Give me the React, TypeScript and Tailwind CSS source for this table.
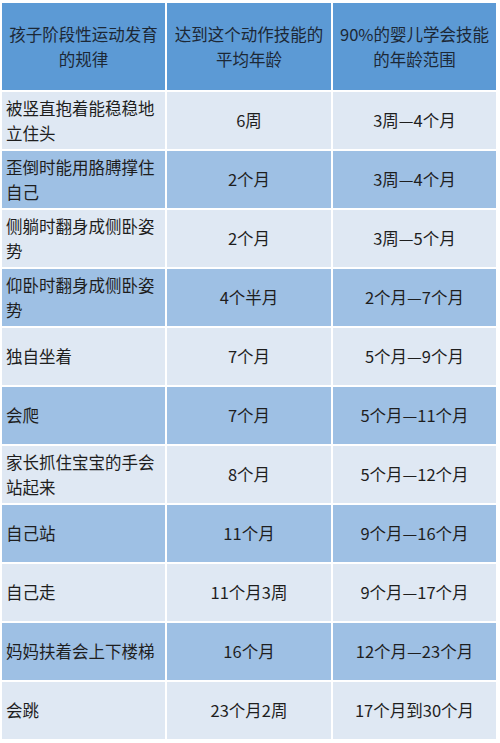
const rows: [string, string, string][] = [
  ["被竖直抱着能稳稳地立住头", "6周", "3周—4个月"],
  ["歪倒时能用胳膊撑住自己", "2个月", "3周—4个月"],
  ["侧躺时翻身成侧卧姿势", "2个月", "3周—5个月"],
  ["仰卧时翻身成侧卧姿势", "4个半月", "2个月—7个月"],
  ["独自坐着", "7个月", "5个月—9个月"],
  ["会爬", "7个月", "5个月—11个月"],
  ["家长抓住宝宝的手会站起来", "8个月", "5个月—12个月"],
  ["自己站", "11个月", "9个月—16个月"],
  ["自己走", "11个月3周", "9个月—17个月"],
  ["妈妈扶着会上下楼梯", "16个月", "12个月—23个月"],
  ["会跳", "23个月2周", "17个月到30个月"],
];

export default function App() {
  return (
    <div
      className="h-[743px] w-[500px] bg-white pl-[2px] pt-[3px] text-[16.5px] leading-[25px] text-[#1e1e1e]"
      style={{ fontFamily: '"Noto Sans CJK SC", "Noto Sans", sans-serif' }}
    >
      <div className="grid grid-cols-[163px_164px_163px] grid-rows-[87px_repeat(11,57px)] gap-[2px]">
        <div className="flex items-center justify-center bg-[#5c9ad5] px-[6px] text-center text-[#1c2836]">
          孩子阶段性运动发育的规律
        </div>
        <div className="flex items-center justify-center bg-[#5c9ad5] px-[6px] text-center text-[#1c2836]">
          达到这个动作技能的平均年龄
        </div>
        <div className="flex items-center justify-center bg-[#5c9ad5] px-[6px] text-center text-[#1c2836]">
          90%的婴儿学会技能的年龄范围
        </div>
        {rows.map(([skill, avg, range], i) => {
          const bg = i % 2 === 0 ? "bg-[#dfe8f3]" : "bg-[#9ec0e4]";
          return (
            <div key={skill} className="contents">
              <div className={`flex items-center pl-[4px] pr-[2px] ${bg}`}>{skill}</div>
              <div className={`flex items-center justify-center ${bg}`}>{avg}</div>
              <div className={`flex items-center justify-center ${bg}`}>{range}</div>
            </div>
          );
        })}
      </div>
    </div>
  );
}
